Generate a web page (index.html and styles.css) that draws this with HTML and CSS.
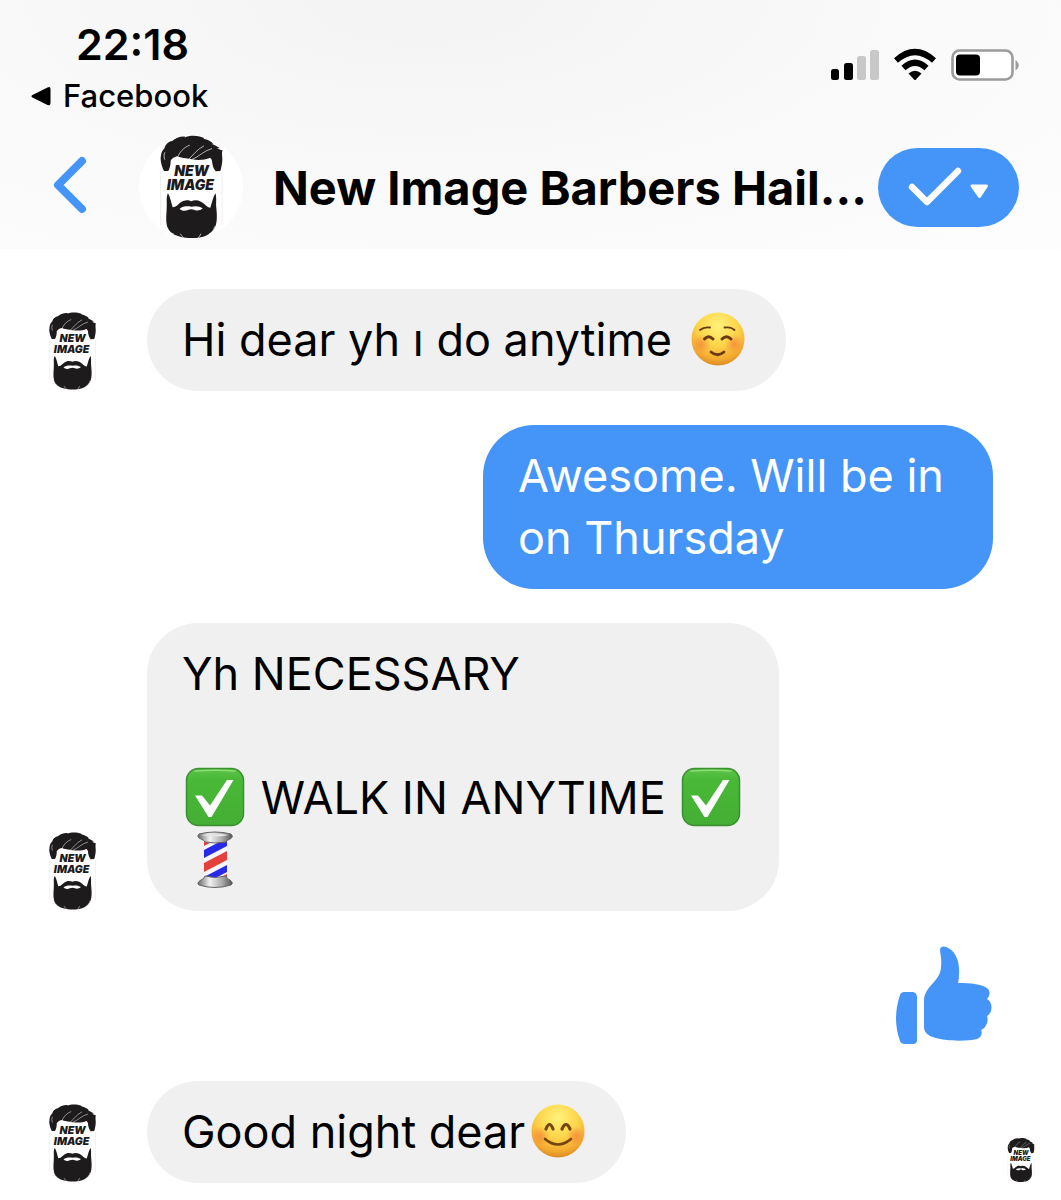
FILE: index.html
```html
<!DOCTYPE html>
<html lang="en">

<head>
    <meta charset="UTF-8">
    <meta name="viewport" content="width=device-width, initial-scale=1.0">
    <title>New Image Barbers</title>
    <link rel="stylesheet" href="styles.css">
</head>

<body>
    <!-- SHARED DRAWINGS -->
    <svg class="defs" aria-hidden="true">
        <defs>
            <radialGradient id="skin" cx="50%" cy="25%" r="75%">
                <stop offset="0" stop-color="#fff27a" />
                <stop offset="0.5" stop-color="#fdd549" />
                <stop offset="0.85" stop-color="#f3a92f" />
                <stop offset="1" stop-color="#dd8a25" />
            </radialGradient>
            <radialGradient id="blush">
                <stop offset="0" stop-color="#f4743b" stop-opacity="0.6" />
                <stop offset="1" stop-color="#f4743b" stop-opacity="0" />
            </radialGradient>
            <linearGradient id="green" x1="0" y1="0" x2="0" y2="1">
                <stop offset="0" stop-color="#5cc24a" />
                <stop offset="0.2" stop-color="#48b936" />
                <stop offset="1" stop-color="#45ad35" />
            </linearGradient>
            <linearGradient id="metal" x1="0" y1="0" x2="1" y2="0">
                <stop offset="0" stop-color="#666" />
                <stop offset="0.35" stop-color="#f2f2f2" />
                <stop offset="0.7" stop-color="#aaa" />
                <stop offset="1" stop-color="#555" />
            </linearGradient>
            <clipPath id="tube">
                <path d="M19 12h23v38H19z" />
            </clipPath>
        </defs>
        <symbol id="check" viewBox="0 0 60 60">
            <rect x="1.5" y="1.5" width="57" height="57" rx="12" fill="url(#green)" stroke="#37912d" stroke-width="1.5" />
            <path d="M10 4Q30 2.500 50 4" fill="none" stroke="#8ade74" stroke-width="1.500" stroke-linecap="round" />
            <path fill="#fff" d="M10 28.500L17 28.500L25 38.500L42 13L48.500 13L26.500 50L23.500 50Z" />
        </symbol>
    </svg>

    <header class="header">
        <div class="status">
            <div class="status-left">
                <time class="clock">22:18</time>
                <a class="return" href="#">
                    <svg width="20" height="20" viewBox="0 0 20 20" aria-hidden="true">
                        <path d="M1.500 9Q-.5 10 1.500 11.500L16.500 19Q19.500 20 19.500 17V3Q19.500 0 16.500 1.500Z" />
                    </svg>
                    Facebook
                </a>
            </div>
            <div class="status-icons">
                <svg width="48" height="34" viewBox="0 0 48 34" role="img" aria-label="Signal">
                    <rect x="0" y="21" width="8" height="11" rx="2.500" />
                    <rect x="13" y="15" width="9" height="17" rx="2.500" />
                    <rect x="26" y="8" width="9" height="24" rx="2.500" fill="#c8c8c8" />
                    <rect x="39" y="2" width="9" height="30" rx="2.500" fill="#c8c8c8" />
                </svg>
                <svg width="42" height="34" viewBox="0 0 42 34" role="img" aria-label="Wi-Fi">
                    <g fill="none" stroke="#000" stroke-width="6">
                        <path d="M2 12.500Q21-4.500 40 12.500" />
                        <path d="M9.500 20Q21 9.500 32.500 20" />
                    </g>
                    <path d="M14.500 25.500Q21 20 27.500 25.500L22 31.500Q21 32.500 20 31.500Z" />
                </svg>
                <svg width="68" height="34" viewBox="0 0 68 34" role="img" aria-label="Battery">
                    <rect x="1.500" y="2.500" width="60" height="29" rx="7" fill="#fff" stroke="#9b9b9b" stroke-width="2.600" />
                    <rect x="5" y="6.500" width="24" height="21" rx="4" />
                    <path d="M64.500 12Q71 17 64.500 22.500Z" fill="#9b9b9b" />
                </svg>
            </div>
        </div>
        <div class="title-bar">
            <button class="back" type="button" aria-label="Back">
                <svg width="34" height="58" viewBox="0 0 34 58" aria-hidden="true">
                    <path d="M29 5L5 29L29 53" fill="none" stroke="#4595f8" stroke-width="8" stroke-linecap="round" stroke-linejoin="round" />
                </svg>
            </button>
            <span class="profile">
                <svg class="profile-logo" viewBox="85 45 195 312" role="img" aria-label="New Image">
                    <g id="logo">
                        <path fill="#fff" d="M90 100h184v215q-10 40-92 40t-92-40z" />
                        <path stroke="#e6e6e6" stroke-width="2" d="M90 154v162M274 154v162" />
                        <path fill="#1d1b1c" d="M100 153C92 137 88 119 91 106C92 94 98 88 102 84C103 75 112 66 124 62L121 66C132 54 151 48 164 50L160 53C178 45 207 46 221 55L218 56C231 58 243 64 248 72L242 71C252 75 263 80 268 85L259 84C266 89 272 91 276 91C272 98 275 107 275 117C275 130 272 143 269 153L255 154C250 148 246 139 245 130C244 121 243 116 238 113C223 119 206 122 184 118C165 115 151 114 139 109C130 112 123 116 120 122C120 136 117 145 113 153Z" />
                        <path fill="none" stroke="#fff" stroke-width="2" stroke-linecap="round" d="M141 112C146 97 158 83 176 76M174 118C188 105 199 88 219 78M185 118C204 111 219 92 243 86M102 98C99 104 100 112 102 118" />
                        <path fill="#1d1b1c" d="M112 220C119 232 122 249 126 262C139 262 145 247 158 243C169 239 177 242 182 244C190 240 201 240 211 245C221 249 229 263 239 263C244 248 247 232 254 220C259 232 255 249 257 264C259 285 261 311 250 328C240 342 222 351 204 353C186 355 166 355 149 350C130 346 115 337 110 321C104 301 108 280 108 264C110 249 105 232 112 220Z" />
                        <path fill="#fff" d="M147 266C157 258 171 258 182 260C194 257 207 258 216 265C210 271 199 274 192 270C185 267 178 267 172 270C163 274 152 273 147 266Z" />
                        <path fill="none" stroke="#fff" stroke-width="2" d="M110 323C113 334 120 339 130 343M149 341C153 348 157 352 162 355M211 341C208 347 205 351 202 355M252 319C250 331 244 337 235 342" />
                        <text class="logo-text" x="183" y="167" text-anchor="middle">NEW</text>
                        <text class="logo-text" x="179" y="210" text-anchor="middle">IMAGE</text>
                    </g>
                </svg>
            </span>
            <h1 class="name">New Image Barbers Hail...</h1>
            <button class="done" type="button" aria-label="Mark as done">
                <svg width="82" height="40" viewBox="0 0 82 40" aria-hidden="true">
                    <path d="M4 20L19 35L50 4" fill="none" stroke="#fff" stroke-width="6.500" stroke-linecap="round" stroke-linejoin="round" />
                    <path d="M64 17.500H78Q81 17.500 79.500 20L73 30Q71.500 32 70 30L63 20Q61.500 17.500 64 17.500Z" fill="#fff" />
                </svg>
            </button>
        </div>
    </header>

    <main class="chat">
        <div class="row">
            <svg class="avatar" viewBox="85 45 195 312" role="img" aria-label="New Image"><use href="#logo" /></svg>
            <p class="bubble">Hi dear yh ı do anytime <svg class="emoji" viewBox="0 0 60 60" role="img" aria-label="Relaxed face">
                    <circle cx="30" cy="30" r="26.500" fill="url(#skin)" />
                    <circle cx="13" cy="35" r="10" fill="url(#blush)" />
                    <circle cx="46" cy="35" r="10" fill="url(#blush)" />
                    <g fill="none" stroke="#6a3b13" stroke-linecap="round">
                        <path d="M12 21Q16 17.500 22 18.500M36.500 18.500Q43 17.500 46.500 21" stroke-width="1.800" />
                        <path d="M16.500 30Q20.500 25.500 25 30M34 30Q38.500 25.500 43 30" stroke-width="3" />
                        <path d="M23 43Q29.500 48.500 36 43" stroke-width="2.800" />
                    </g>
                </svg></p>
        </div>

        <div class="row">
            <p class="bubble sent">Awesome. Will be in on Thursday</p>
        </div>

        <div class="row">
            <svg class="avatar" viewBox="85 45 195 312" role="img" aria-label="New Image"><use href="#logo" /></svg>
            <p class="bubble">Yh NECESSARY<br><br><svg class="emoji" role="img" aria-label="Check"><use href="#check" /></svg> WALK IN ANYTIME <svg class="emoji" role="img" aria-label="Check"><use href="#check" /></svg><br><svg class="emoji" viewBox="0 0 60 60" role="img" aria-label="Barber pole">
                    <g clip-path="url(#tube)">
                        <path d="M18 12h25v38H18z" fill="#f7f7fb" />
                        <path d="M19 21L42 9V17L19 29ZM19 48L42 36V43L19 55Z" fill="#2929e8" />
                        <path d="M19 8L42-4V5L19 17ZM19 34L42 22V31L19 43ZM19 57L42 45V52H19Z" fill="#e6403c" />
                    </g>
                    <path fill="url(#metal)" stroke="#666" d="M14 5Q30 1 46 5Q49 8 45 10Q42 11 41 13Q30 15 20 13Q19 11 16 10Q11 8 14 5Z" />
                    <path d="M16 6Q30 3 44 6Q30 9 16 6Z" fill="#e4e4e4" />
                    <path fill="url(#metal)" stroke="#666" d="M20 47Q30 50 41 47Q42 50 45 51Q49 54 46 56Q30 61 14 56Q11 54 16 51Q19 50 20 47Z" />
                </svg></p>
        </div>

        <div class="row">
            <svg class="like" viewBox="0 0 96 102" role="img" aria-label="Like">
                <path fill="#4595f8" d="M8 47H17Q21 48 21 52V95Q21 99 17 99H9Q5 99 4 96Q-4 74 4 50Q5 47 8 47Z" />
                <path fill="#4595f8" d="M28 56C28 41 45 36 45 22C46 13 44 8 44 5C44 1 48 1 50 2C60 5 64 18 63 29Q63 35 62 38C75 38 87 39 92 44C95 48 93 52 91 54C97 57 97 68 91 71C93 76 90 83 85 85C87 88 85 93 81 94C69 97 44 96 34 91C29 88 28 85 28 81Z" />
            </svg>
        </div>

        <div class="row">
            <svg class="avatar" viewBox="85 45 195 312" role="img" aria-label="New Image"><use href="#logo" /></svg>
            <p class="bubble">Good night dear<svg class="emoji" viewBox="0 0 60 60" role="img" aria-label="Smiling face">
                    <circle cx="30" cy="30" r="26.500" fill="url(#skin)" />
                    <circle cx="12" cy="35" r="10" fill="url(#blush)" />
                    <circle cx="48" cy="35" r="10" fill="url(#blush)" />
                    <g fill="none" stroke="#75460f" stroke-linecap="round">
                        <path d="M18 28Q21.500 19 25 28M34 28Q38 19 42 28" stroke-width="3.200" />
                        <path d="M17 38Q30 49 43 38" stroke-width="2.600" />
                    </g>
                </svg></p>
            <svg class="seen" viewBox="85 45 195 312" role="img" aria-label="Seen"><use href="#logo" /></svg>
        </div>
    </main>
</body>

</html>
```
FILE: styles.css
```css
* {
    margin: 0;
    padding: 0;
    box-sizing: border-box;
    font-family: Inter, 'Liberation Sans', sans-serif;
}

body {
    background-color: #fff;
    color: #000;
}

button {
    border: none;
    background: none;
    cursor: pointer;
}

svg {
    flex-shrink: 0;
}

.defs {
    position: absolute;
    width: 0;
    height: 0;
}

/* HEADER */
.header {
    padding: 18px 42px 10px 31px;
    background-color: #fcfcfc;
    background-image: radial-gradient(ellipse at 40% 0%, #f3f3f3 0%, #f9f9f9 50%, #fdfdfd 100%);
}

.status {
    display: flex;
    justify-content: space-between;
    align-items: center;
    padding-bottom: 12px;
}

.status-left {
    line-height: 52px;
}

.clock {
    display: block;
    padding-left: 45px;
    font-size: 43px;
    font-weight: 600;
}

.return {
    display: flex;
    align-items: center;
    gap: 12px;
    color: #000;
    font-size: 31px;
    font-weight: 500;
    text-decoration: none;
}

.status-icons {
    display: flex;
    gap: 15px;
    padding-bottom: 10px;
}

.title-bar {
    display: flex;
    align-items: center;
    padding-top: 1px;
}

.back {
    display: flex;
    padding: 0 52px 4px 22px;
}

.profile {
    display: flex;
    flex-shrink: 0;
    justify-content: center;
    width: 104px;
    height: 104px;
    border-radius: 50%;
    background-color: #fff;
}

.profile-logo {
    width: 65px;
    height: 104px;
}

.logo-text {
    fill: #1d1b1c;
    font-size: 42px;
    font-style: italic;
    font-weight: 900;
}

.name {
    flex: 1;
    min-width: 0;
    padding-left: 30px;
    overflow: hidden;
    font-size: 47px;
    font-weight: 700;
    white-space: nowrap;
}

.done {
    display: flex;
    flex-shrink: 0;
    justify-content: center;
    align-items: center;
    width: 141px;
    height: 79px;
    border-radius: 40px;
    background-color: #4595f8;
}

/* MESSAGES */
.chat {
    display: flex;
    flex-direction: column;
    gap: 34px;
    padding: 40px 0 17px 48px;
}

.row {
    display: grid;
    grid-template-columns: 99px minmax(0, 1fr) 68px;
    align-items: end;
}

.avatar {
    width: 49px;
    height: 80px;
}

.bubble {
    grid-column: 2;
    justify-self: start;
    max-width: 640px;
    padding: 20px 35px;
    border-radius: 51px;
    background-color: #f0f0f0;
    font-size: 45px;
    line-height: 62px;
}

.sent {
    justify-self: end;
    max-width: 510px;
    background-color: #4595f8;
    color: #fff;
}

.emoji {
    width: 60px;
    height: 60px;
    margin: 0 3px;
    vertical-align: -13px;
}

.like {
    grid-column: 2;
    justify-self: end;
    width: 98px;
    height: 102px;
}

.seen {
    width: 28px;
    height: 46px;
    margin-left: 14px;
}
```
